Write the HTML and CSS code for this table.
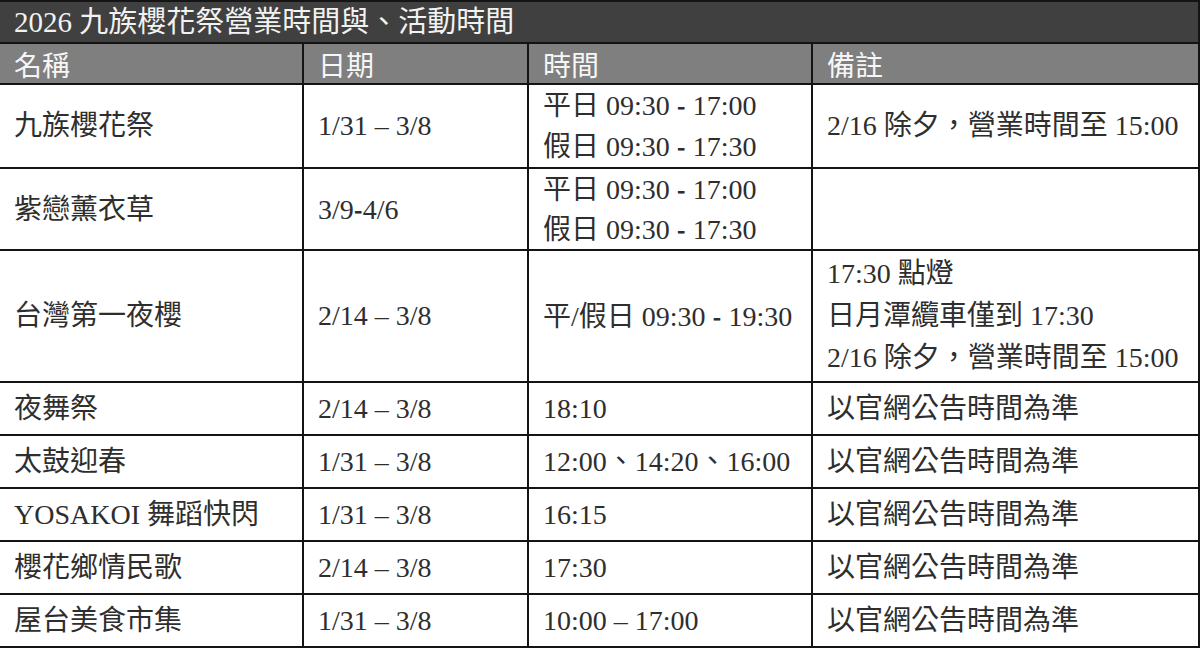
FILE: index.html
```html
<!DOCTYPE html>
<html lang="zh-Hant">
<head>
<meta charset="utf-8">
<title>2026 九族櫻花祭營業時間與、活動時間</title>
<link rel="stylesheet" href="styles.css">
</head>
<body>
<table class="schedule">
  <colgroup>
    <col class="c-name">
    <col class="c-date">
    <col class="c-time">
    <col class="c-note">
  </colgroup>
  <thead>
    <tr class="title-row">
      <th colspan="4" class="title">2026 九族櫻花祭營業時間與、活動時間</th>
    </tr>
    <tr class="head-row">
      <th>名稱</th>
      <th>日期</th>
      <th>時間</th>
      <th>備註</th>
    </tr>
  </thead>
  <tbody>
    <tr class="row-2">
      <td>九族櫻花祭</td>
      <td>1/31 – 3/8</td>
      <td><div>平日 09:30 <span class="hy">-</span> 17:00</div><div>假日 09:30 <span class="hy">-</span> 17:30</div></td>
      <td>2/16 除夕，營業時間至 15:00</td>
    </tr>
    <tr class="row-2b">
      <td>紫戀薰衣草</td>
      <td>3/9<span class="hy">-</span>4/6</td>
      <td><div>平日 09:30 <span class="hy">-</span> 17:00</div><div>假日 09:30 <span class="hy">-</span> 17:30</div></td>
      <td></td>
    </tr>
    <tr class="row-3">
      <td>台灣第一夜櫻</td>
      <td>2/14 – 3/8</td>
      <td>平/假日 09:30 <span class="hy">-</span> 19:30</td>
      <td><div>17:30 點燈</div><div>日月潭纜車僅到 17:30</div><div>2/16 除夕，營業時間至 15:00</div></td>
    </tr>
    <tr class="row-1">
      <td>夜舞祭</td>
      <td>2/14 – 3/8</td>
      <td>18:10</td>
      <td>以官網公告時間為準</td>
    </tr>
    <tr class="row-1">
      <td>太鼓迎春</td>
      <td>1/31 – 3/8</td>
      <td>12:00、14:20、16:00</td>
      <td>以官網公告時間為準</td>
    </tr>
    <tr class="row-1">
      <td>YOSAKOI 舞蹈快閃</td>
      <td>1/31 – 3/8</td>
      <td>16:15</td>
      <td>以官網公告時間為準</td>
    </tr>
    <tr class="row-1">
      <td>櫻花鄉情民歌</td>
      <td>2/14 – 3/8</td>
      <td>17:30</td>
      <td>以官網公告時間為準</td>
    </tr>
    <tr class="row-1">
      <td>屋台美食市集</td>
      <td>1/31 – 3/8</td>
      <td>10:00 – 17:00</td>
      <td>以官網公告時間為準</td>
    </tr>
  </tbody>
</table>
</body>
</html>
```

FILE: styles.css
```css
html, body {
  margin: 0;
  padding: 0;
  background: #ffffff;
}

.schedule {
  border-collapse: collapse;
  table-layout: fixed;
  width: 1199px;
  font-family: "Liberation Serif", "Noto Sans CJK TC", serif;
  font-size: 28px;
  color: #2e2e2e;
}

.c-name { width: 303px; }
.c-date { width: 225px; }
.c-time { width: 284px; }
.c-note { width: 387px; }

.schedule th,
.schedule td {
  border: 2px solid #141414;
  padding: 0 0 0 14px;
  text-align: left;
  vertical-align: middle;
  white-space: nowrap;
  line-height: 40px;
  font-weight: normal;
}

.schedule tr > :first-child {
  border-left: none;
}

.title-row {
  height: 41px;
}

.title {
  background: #404040;
  color: #f2f2f2;
  font-size: 29px;
  line-height: 38px;
  padding-left: 13px;
}

.head-row {
  height: 41px;
}

.head-row th {
  background: #7f7f7f;
  color: #f6f6f6;
  font-family: "Noto Sans CJK TC", sans-serif;
  font-size: 28px;
  line-height: 38px;
}

.row-2 { height: 83px; }
.row-2b { height: 81px; }
.row-3 { height: 132px; }
.row-1 { height: 53px; }

.row-2b td {
  line-height: 39px;
}

.row-3 td {
  line-height: 42px;
}

.hy {
  font-family: "Noto Sans CJK TC", sans-serif;
  font-weight: bold;
  font-size: 24px;
}
```
